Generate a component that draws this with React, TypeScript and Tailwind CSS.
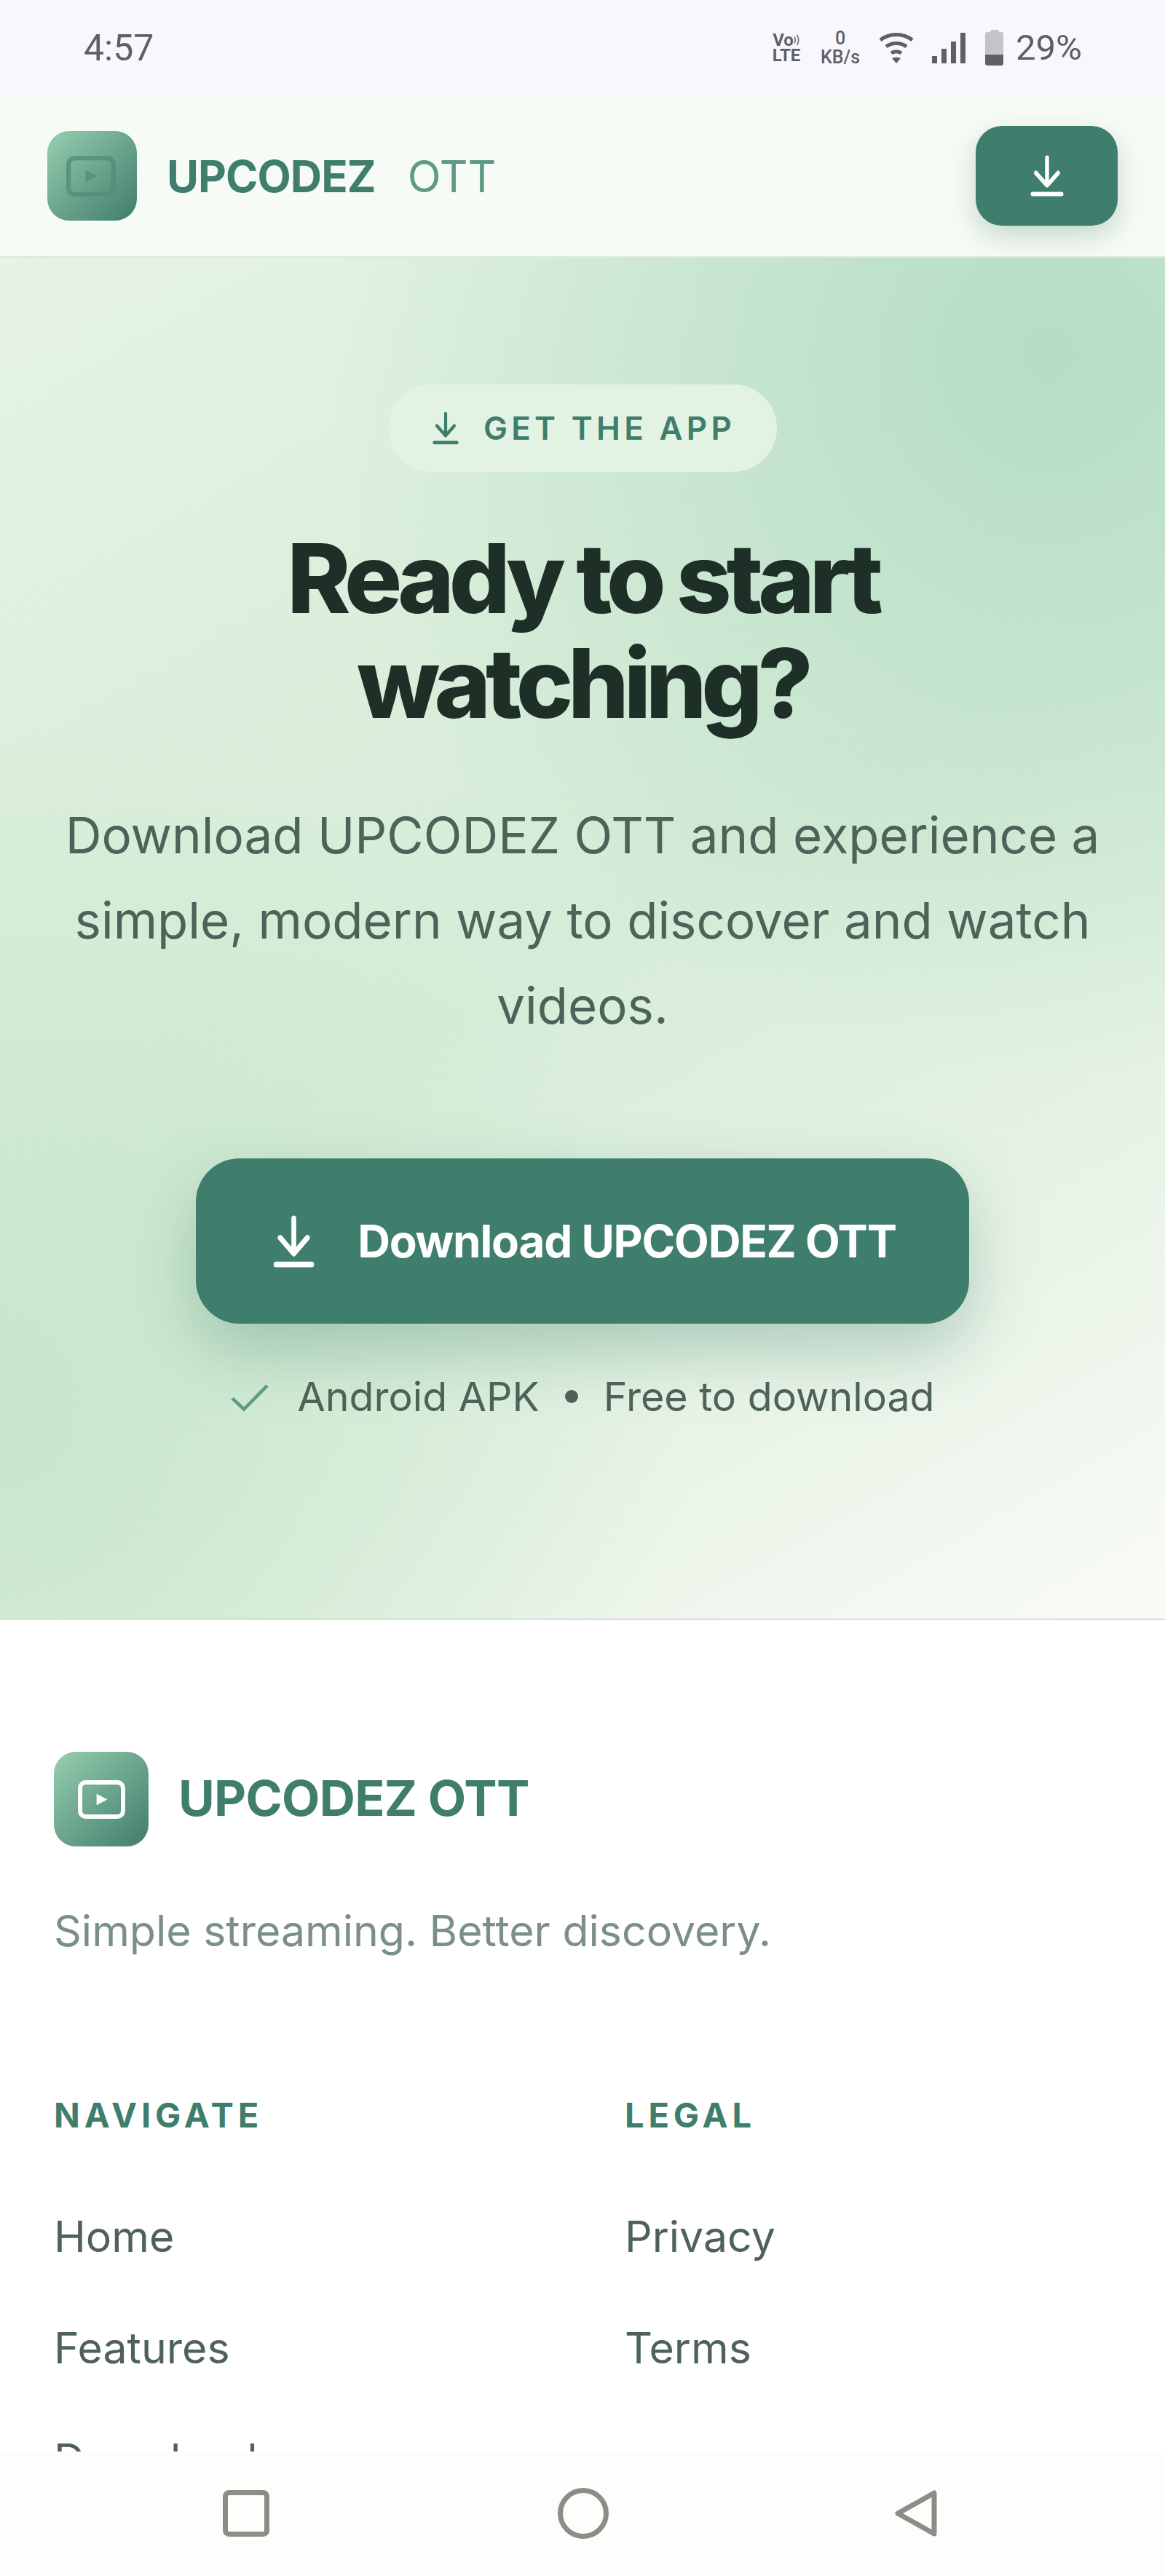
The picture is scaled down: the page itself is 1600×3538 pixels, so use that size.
import React from 'react';

const DownloadIcon = ({ className }: { className?: string }) => (
  <svg viewBox="0 0 24 24" preserveAspectRatio="none" fill="none" stroke="currentColor" strokeLinecap="round" strokeLinejoin="round" strokeWidth={2.3} className={className}>
    <path d="M12 2.5v14" />
    <path d="M5.5 10.5l6.5 6.5 6.5-6.5" />
    <path d="M3.5 21.5h17" />
  </svg>
);

const PlayBox = ({ className }: { className?: string }) => (
  <svg viewBox="0 0 66 54" fill="none" className={className}>
    <rect x="3" y="3" width="60" height="48" rx="8" stroke="currentColor" strokeWidth="6" />
    <path d="M26 19l15 8-15 8z" fill="currentColor" />
  </svg>
);

const StatusIcons = () => (
  <div className="flex items-center text-[#5f5f66] font-['Roboto',sans-serif]">
    <div className="flex w-[40px] flex-col items-center text-[24px] leading-[21px] font-bold">
      <div className="flex items-center">
        <span>Vo</span>
        <svg viewBox="0 0 10 20" className="h-[20px] w-[9px]" fill="none" stroke="currentColor" strokeWidth="1.6">
          <path d="M1 5c2 3 2 7 0 10" />
          <path d="M5 2c3 5 3 11 0 16" />
        </svg>
      </div>
      <span>LTE</span>
    </div>
    <div className="ml-[25px] flex w-[58px] flex-col items-center text-[25px] leading-[26px] font-medium">
      <span>0</span>
      <span>KB/s</span>
    </div>
    <svg viewBox="0 0 48 42" className="ml-[24px] h-[42px] w-[48px]" fill="none" stroke="currentColor" strokeWidth="5">
      <path d="M2 10c13-10 31-10 44 0" />
      <path d="M10 19c8-6 20-6 28 0" />
      <path d="M17 28c4-3 10-3 14 0" />
      <path d="M24 42l-6-7c4-2 8-2 12 0z" fill="currentColor" stroke="none" />
    </svg>
    <svg viewBox="0 0 46 42" className="ml-[25px] h-[42px] w-[46px]" fill="currentColor">
      <rect x="0" y="32" width="7" height="10" />
      <rect x="13" y="22" width="7" height="20" />
      <rect x="26" y="12" width="7" height="30" />
      <rect x="39" y="0" width="7" height="42" />
    </svg>
    <div className="ml-[27px] flex h-[49px] w-[25px] flex-col">
      <div className="mx-auto h-[3px] w-[12px] rounded-t-sm bg-[#c4c3c9]" />
      <div className="h-[31px] rounded-t-[3px] bg-[#c4c3c9]" />
      <div className="h-[15px] rounded-b-[3px] bg-[#5f5f66]" />
    </div>
    <span className="ml-[17px] text-[49px] leading-none">29%</span>
  </div>
);

export default function App() {
  return (
    <div className="relative h-[3538px] w-full overflow-hidden bg-white font-['Inter',sans-serif]">
      {/* Status bar */}
      <div className="flex h-[131px] items-center justify-between bg-[#f8f7fd] pr-[114px] pl-[115px]">
        <span className="text-[50px] leading-none text-[#5f5f66] font-['Roboto',sans-serif]">4:57</span>
        <StatusIcons />
      </div>

      {/* Header */}
      <div className="flex h-[223px] items-center justify-between border-b-2 border-[#dbe7dd] bg-gradient-to-r from-[#f6fbf5] to-[#f7fbf5] px-[65px]">
        <div className="flex items-center">
          <div className="flex h-[123px] w-[123px] items-center justify-center rounded-[30px] bg-gradient-to-br from-[#97cfb0] to-[#3f7d6c]">
            <PlayBox className="h-[56px] w-[68px] -translate-x-[2px] text-[#4f8f7b]/80" />
          </div>
          <span className="ml-[41px] text-[60px] leading-none font-bold tracking-[-0.015em] text-[#3f7d6c]">UPCODEZ</span>
          <span className="ml-[44px] text-[60px] leading-none font-normal text-[#5f9a87]">OTT</span>
        </div>
        <button className="flex h-[137px] w-[195px] items-center justify-center rounded-[36px] bg-[#3f7d6c] text-white shadow-[0_14px_36px_rgba(63,125,108,0.28)]">
          <DownloadIcon className="h-[63px] w-[56px]" />
        </button>
      </div>

      {/* Hero */}
      <section className="flex h-[1871px] flex-col items-center border-b-2 border-[#d9e0dc] bg-[radial-gradient(circle_at_90%_7%,#b5ddc5_0%,rgba(181,221,197,0)_44%),radial-gradient(circle_at_0%_85%,#c8e6cb_0%,rgba(200,230,203,0)_42%),linear-gradient(150deg,#e6f4e5_0%,#dcefdc_25%,#d6ecd8_50%,#e4f2e3_72%,#fafbf7_100%)] pt-[174px]">
        <div className="flex h-[120px] w-[534px] items-center justify-center rounded-full bg-[#e3f3e3] text-[#3f7d6c]">
          <DownloadIcon className="h-[50px] w-[44px]" />
          <span className="ml-[30px] text-[44px] leading-none font-semibold tracking-[0.12em]">GET THE APP</span>
        </div>
        <h1 className="mt-[74px] w-[1100px] text-center text-[132px] leading-[144px] font-extrabold tracking-[-0.055em] text-[#1e2f28]">
          Ready to start watching?
        </h1>
        <p className="mt-[79px] w-[1460px] text-center text-[69px] leading-[117px] font-normal text-[#4d6259]">
          Download UPCODEZ OTT and experience a simple, modern way to discover and watch videos.
        </p>
        <button className="mt-[151px] flex h-[227px] w-[1062px] items-center justify-center rounded-[60px] bg-[#3f7d6c] text-white shadow-[0_36px_90px_rgba(63,125,108,0.34)]">
          <DownloadIcon className="h-[80px] w-[69px]" />
          <span className="ml-[53px] text-[62px] leading-none font-bold tracking-[-0.02em]">Download UPCODEZ OTT</span>
        </button>
        <div className="mt-[70px] flex items-center pr-[5px] text-[55.5px] leading-none text-[#4d6259]">
          <svg viewBox="0 0 24 24" preserveAspectRatio="none" fill="none" stroke="#5f9a87" strokeWidth="1.8" className="h-[60px] w-[64px]">
            <path d="M3 13l6 6L21 6" />
          </svg>
          <span className="ml-[33px]">Android APK</span>
          <span className="mx-[35px] h-[18px] w-[18px] rounded-full bg-[#4d6259]" />
          <span>Free to download</span>
        </div>
      </section>

      {/* Footer */}
      <footer className="bg-white px-[74px] pt-[181px]">
        <div className="flex items-center">
          <div className="flex h-[130px] w-[130px] items-center justify-center rounded-[30px] bg-gradient-to-br from-[#97cfb0] to-[#3f7d6c]">
            <PlayBox className="h-[53px] w-[65px] text-white" />
          </div>
          <span className="ml-[41px] -translate-y-[2px] text-[68px] leading-none font-bold tracking-[-0.01em] text-[#3f7d6c]">UPCODEZ OTT</span>
        </div>
        <p className="mt-[86px] text-[59px] leading-none text-[#7a8f88]">Simple streaming. Better discovery.</p>
        <div className="mt-[200px] grid grid-cols-[784px_1fr]">
          <div>
            <h3 className="text-[47px] leading-none font-bold tracking-[0.125em] text-[#3f7d6c]">NAVIGATE</h3>
            <ul className="mt-[114px] flex flex-col gap-[93px] text-[59px] leading-[60px] text-[#4d6259]">
              <li>Home</li>
              <li>Features</li>
              <li>Download</li>
            </ul>
          </div>
          <div>
            <h3 className="text-[47px] leading-none font-bold tracking-[0.125em] text-[#3f7d6c]">LEGAL</h3>
            <ul className="mt-[114px] flex flex-col gap-[93px] text-[59px] leading-[60px] text-[#4d6259]">
              <li>Privacy</li>
              <li>Terms</li>
            </ul>
          </div>
        </div>
      </footer>

      {/* Android nav bar, sits over the page */}
      <div className="absolute right-0 bottom-0 left-0 flex h-[171px] items-center bg-[#fdfdfb] text-[#8c8d89]">
        <svg viewBox="0 0 64 64" className="absolute top-[53px] left-[306px] h-[64px] w-[64px]" fill="none" stroke="currentColor" strokeWidth="7">
          <rect x="3.5" y="3.5" width="57" height="57" rx="5" />
        </svg>
        <svg viewBox="0 0 70 70" className="absolute top-[50px] left-[766px] h-[70px] w-[70px]" fill="none" stroke="currentColor" strokeWidth="7">
          <circle cx="35" cy="35" r="31.5" />
        </svg>
        <svg viewBox="0 0 60 64" className="absolute top-[53px] left-[1228px] h-[64px] w-[60px]" fill="none" stroke="currentColor" strokeWidth="7" strokeLinejoin="round">
          <path d="M55 4v56L5 32z" />
        </svg>
      </div>
    </div>
  );
}
